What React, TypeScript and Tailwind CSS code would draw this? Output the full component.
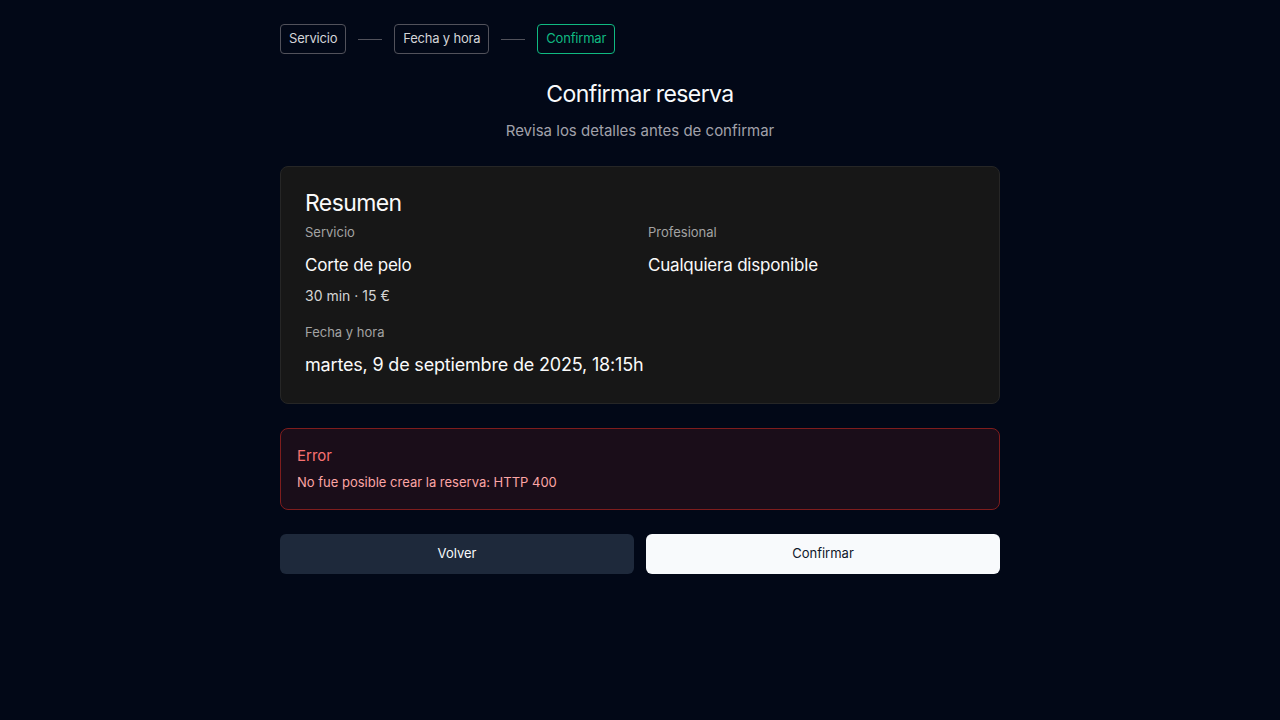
import React from "react";

export default function App() {
  return (
    <div className="min-h-screen w-full bg-[#020817] text-white" style={{ fontFamily: "Inter, 'Noto Sans', sans-serif" }}>
      <div className="mx-auto w-[720px] pt-6">
        <div className="flex items-center gap-3">
          <div className="h-[30px] px-2 flex items-center rounded border border-[#52525b] text-[13px] tracking-[-0.2px] text-[#d4d4d8]">Servicio</div>
          <div className="w-6 h-px bg-[#52525b]" />
          <div className="h-[30px] px-2 flex items-center rounded border border-[#52525b] text-[13px] tracking-[-0.2px] text-[#d4d4d8]">Fecha y hora</div>
          <div className="w-6 h-px bg-[#52525b]" />
          <div className="h-[30px] px-2 flex items-center rounded border border-[#10b981] text-[13px] tracking-[-0.2px] text-[#10b981]">Confirmar</div>
        </div>

        <div className="mt-6 flex flex-col items-center">
          <h1 className="text-[23px] leading-8 tracking-[-0.6px] text-[#f8fafc]">Confirmar reserva</h1>
          <p className="mt-2 text-[15px] leading-6 text-[#a1a1aa] translate-y-px">Revisa los detalles antes de confirmar</p>
        </div>

        <div className="mt-6 rounded-lg border border-[#262626] bg-[#171717] px-6 pt-5 pb-[22px]">
          <h2 className="text-[23px] leading-8 tracking-[-0.6px] text-[#fafafa]">Resumen</h2>
          <div className="mt-[3px] grid grid-cols-2 gap-x-4">
            <div>
              <div className="text-[13px] leading-5 text-[#a3a3a3]">Servicio</div>
              <div className="mt-[7px] text-[17px] leading-8 tracking-[-0.2px] text-[#fafafa]">Corte de pelo</div>
              <div className="mt-[5px] text-[14px] leading-5 text-[#d4d4d4]">30 min · 15 €</div>
            </div>
            <div>
              <div className="text-[13px] leading-5 text-[#a3a3a3]">Profesional</div>
              <div className="mt-[7px] text-[17px] leading-8 tracking-[-0.2px] text-[#fafafa]">Cualquiera disponible</div>
            </div>
          </div>
          <div className="mt-4 text-[13px] leading-5 text-[#a3a3a3]">Fecha y hora</div>
          <div className="mt-[7px] text-[18px] leading-8 tracking-[-0.18px] text-[#fafafa]">martes, 9 de septiembre de 2025, 18:15h</div>
        </div>

        <div className="mt-6 rounded-lg border border-[#7f1d1d] bg-[#1a0d19] px-4 pt-[15px] pb-[17px]">
          <div className="text-[15px] leading-6 text-[#f87171]">Error</div>
          <div className="mt-1 text-[13px] leading-5 text-[#fca5a5]">No fue posible crear la reserva: HTTP 400</div>
        </div>

        <div className="mt-6 grid grid-cols-2 gap-3">
          <button className="h-10 rounded-md bg-[#1e293b] text-[13px] text-[#f8fafc]">Volver</button>
          <button className="h-10 rounded-md bg-[#f8fafc] text-[13px] text-[#0f172a]">Confirmar</button>
        </div>
      </div>
    </div>
  );
}
